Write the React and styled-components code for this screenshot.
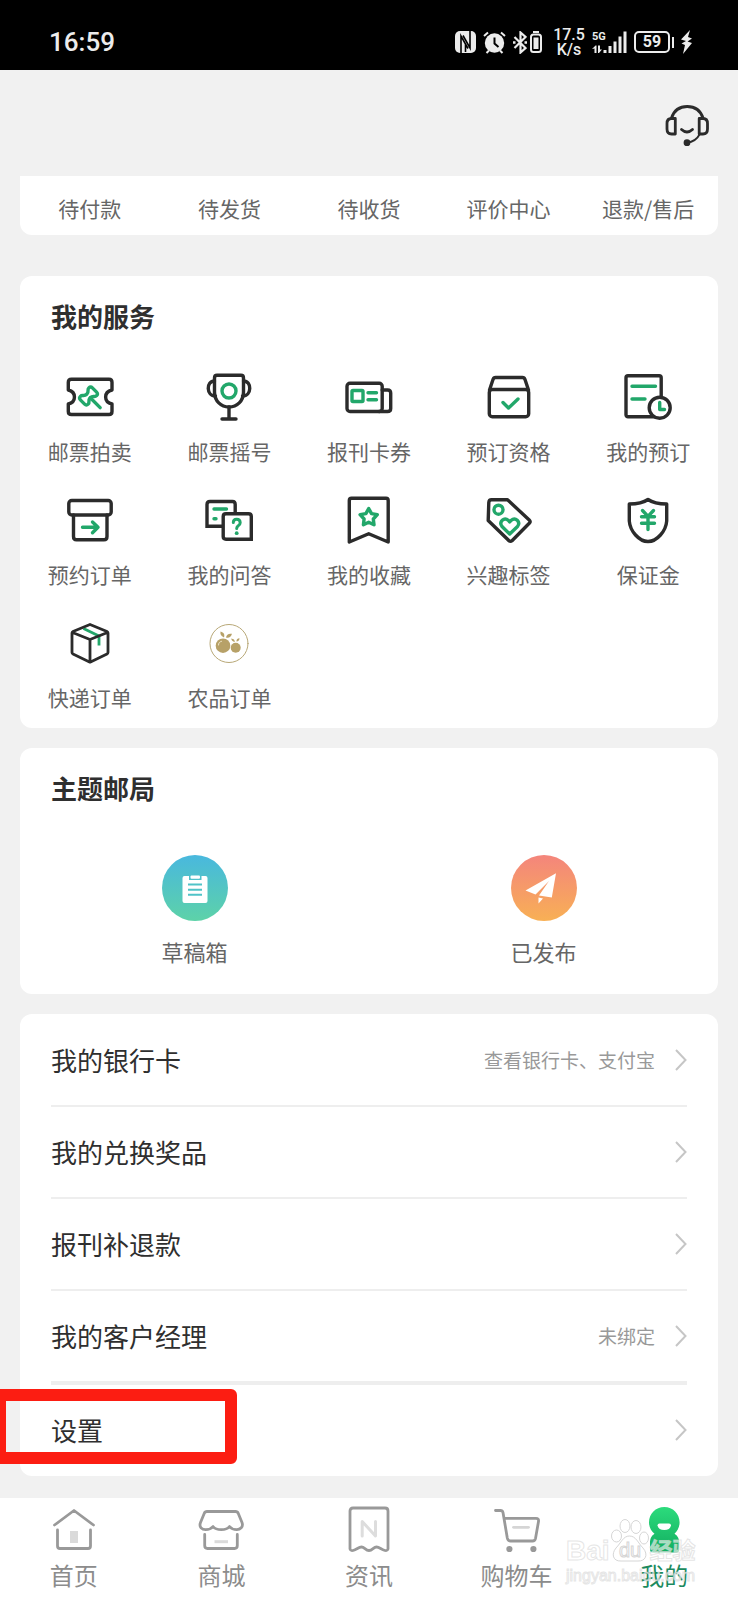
import styled, { createGlobalStyle } from "styled-components";

const GlobalStyle = createGlobalStyle`
  *{
    box-sizing:border-box;
  }
  body{
    margin:0;
    background:#f1f1f1;
    font-family:"Noto Sans CJK SC", "Noto Sans", sans-serif;
    color:#2f2f2f;
  }
  a{
    color:inherit;
    text-decoration:none;
  }
  button{
    margin:0;
    padding:0;
    border:0;
    background:none;
    color:inherit;
    font:inherit;
    cursor:pointer;
  }
  svg{
    display:block;
    flex:none;
  }
`;

const Page = styled.div`
  position: relative;
  display: flex;
  flex-direction: column;
  min-height: 100vh;
  overflow: hidden;
`;

const StatusBar = styled.header`
  display: flex;
  justify-content: space-between;
  align-items: center;
  height: 70px;
  padding: 14px 46px 0 49px;
  background: #000;
  color: #ececec;
  font-family: Roboto, "Noto Sans", sans-serif;
`;

const Clock = styled.time`
  font-size: 26px;
  font-weight: 500;
  line-height: 32px;
`;

const StatusIcons = styled.div`
  display: flex;
  align-items: center;
  gap: 7px;
`;

const Pair = styled.div`
  display: flex;
  gap: 3px;
`;

const Speed = styled.div`
  width: 32px;
  margin-left: 4px;
  font-size: 16px;
  font-weight: 500;
  line-height: 15px;
  text-align: center;
`;

const Battery = styled.div`
  display: flex;
  align-items: center;
  gap: 2px;
  &::after {
    content: "";
    width: 2px;
    height: 11px;
    background: #ececec;
  }
`;

const BatteryLevel = styled.span`
  width: 36px;
  height: 22px;
  border: 2px solid #ececec;
  border-radius: 5px;
  font-size: 16px;
  font-weight: 700;
  line-height: 18px;
  text-align: center;
`;

const TopBar = styled.div`
  display: flex;
  justify-content: flex-end;
  align-items: center;
  height: 106px;
  padding: 6px 27px 0;
`;

const Main = styled.main`
  flex: 1;
  display: flex;
  flex-direction: column;
  gap: 20px;
  padding: 0 20px 22px;
`;

const Card = styled.section`
  border-radius: 12px;
  background: #fff;
`;

const ListCard = styled(Card)`
  padding: 1px 0;
`;

const OrderCard = styled.nav`
  display: grid;
  grid-template-columns: repeat(5, 1fr);
  height: 59px;
  margin-bottom: 21px;
  padding-top: 20px;
  border-radius: 0 0 12px 12px;
  background: #fff;
  color: #666;
  font-size: 21px;
  line-height: 24px;
  text-align: center;
`;

const CardTitle = styled.h2`
  margin: 0;
  padding: 22px 31px 0;
  font-size: 26px;
  font-weight: 700;
  line-height: 36px;
`;

const ServiceGrid = styled.div`
  display: grid;
  grid-template-columns: repeat(${(props) => props.$columns}, 1fr);
  row-gap: 33px;
  padding: ${(props) => (props.$large ? "49px 0 31px" : "39px 0 19px")};
  font-size: ${(props) => (props.$large ? 22 : 21)}px;
`;

const ServiceItem = styled.button`
  display: flex;
  flex-direction: column;
  align-items: center;
  gap: 18px;
  color: #666;
  line-height: 24px;
`;

const ListRow = styled.button`
  position: relative;
  display: flex;
  align-items: center;
  width: 100%;
  padding: 0 31px;
  text-align: left;
`;

const RowBody = styled.span`
  flex: 1;
  display: flex;
  align-items: center;
  height: ${(props) => 90 + props.$line}px;
  border-bottom: ${(props) => props.$line}px solid #eee;
`;

const RowLabel = styled.span`
  flex: 1;
  font-size: 26px;
  line-height: 36px;
`;

const RowHint = styled.span`
  margin-right: 20px;
  color: #999;
  font-size: 19px;
  line-height: 26px;
`;

const Highlight = styled.span`
  position: absolute;
  top: 4px;
  left: -26px;
  width: 243px;
  height: 75px;
  border: 12px solid #fc1d12;
  border-radius: 6px;
  pointer-events: none;
`;

const TabBar = styled.nav`
  display: grid;
  grid-template-columns: repeat(5, 1fr);
  padding: 7px 0 11px;
  background: #fff;
`;

const Tab = styled.a`
  display: flex;
  flex-direction: column;
  align-items: center;
  gap: 8px;
  color: ${(props) => (props.$active ? "#1b8a5e" : "#8c8c8c")};
  font-size: 24px;
  line-height: 28px;
`;

const Watermark = styled.div`
  position: absolute;
  right: 40px;
  bottom: 14px;
  width: 132px;
  color: rgba(255, 255, 255, 0.6);
  -webkit-text-stroke: 1px rgba(212, 212, 212, 0.6);
  font-family: "Liberation Sans", "Noto Sans CJK SC", sans-serif;
  font-size: 16px;
  line-height: 20px;
  pointer-events: none;
`;

const WatermarkLogo = styled.div`
  display: flex;
  align-items: flex-end;
  gap: 1px;
  font-size: 28px;
  font-weight: 700;
  line-height: 30px;
  svg {
    margin-bottom: 4px;
  }
  span:last-child {
    font-size: 23px;
  }
`;

const DARK = "#2b2b2b";
const GREEN = "#22a76a";

function Icon({ children, stroke = DARK, width = 3.4 }) {
  return (
    <svg
      width="48"
      height="48"
      viewBox="0 0 48 48"
      fill="none"
      stroke={stroke}
      strokeWidth={width}
      strokeLinecap="round"
      strokeLinejoin="round"
      aria-hidden="true"
    >
      {children}
    </svg>
  );
}

const HeadsetIcon = () => (
  <Icon width={2.8}>
    <path d="M8.5 16C11 8.5 17 4.5 24.2 4.5S37.500 8.5 40 16" />
    <path d="M12.3 16.5V32H8.5Q4 32 4 27V21.5Q4 16.5 8.5 16.5ZM36.2 16.5V32H40Q44.5 32 44.5 27V21.5Q44.5 16.5 40 16.5Z" />
    <path d="M18.5 27.5Q24 32.5 29.5 27.5" />
    <path d="M36.5 32.5Q33 39.5 24 40.7" strokeWidth="1.8" />
    <circle cx="24" cy="40.7" r="2" fill={DARK} />
  </Icon>
);

const AuctionIcon = () => (
  <Icon>
    <path d="M5.5 6.3H43Q46 6.3 46 9.3V17C37.5 19 37.5 29 46 31V38.5Q46 41.5 43 41.5H5.5Q2.3 41.5 2.3 38.5V31C10.5 29 10.5 19 2.3 17V9.3Q2.3 6.3 5.5 6.3Z" />
    <g stroke={GREEN} transform="translate(22.5 23) rotate(-45)">
      <path d="M-6 -5.5C-3 -5.5 -4 -2.5 0 -2.5C4 -2.5 3 -5.5 6 -5.5Q8.5 -5.5 8.5 -3V3Q8.5 5.5 6 5.5C3 5.5 4 2.500 0 2.5C-4 2.5 -3 5.5 -6 5.5Q-8.5 5.5 -8.5 3V-3Q-8.5 -5.5 -6 -5.5Z" />
      <path d="M0 2.5V16.5" />
    </g>
  </Icon>
);

const TrophyIcon = () => (
  <Icon>
    <path d="M12 2.3H36Q38.5 2.3 38.5 5V19C38.5 28 32 34 24 34S9.5 28 9.5 19V5Q9.5 2.3 12 2.3Z" />
    <path d="M9.5 8C1 8 1 23 10.5 23M38.5 8C47 8 47 23 37.5 23M24 34V46M17 46H31" />
    <circle cx="24" cy="18" r="7" stroke={GREEN} />
  </Icon>
);

const CouponIcon = () => (
  <Icon>
    <rect x="2" y="10.2" width="35.2" height="28.3" rx="3" />
    <path d="M37.2 17H42.5Q45.7 17 45.7 20V35.5Q45.7 38.5 42.5 38.5H34" />
    <g stroke={GREEN}>
      <rect x="7" y="17.5" width="11" height="11" rx="1" />
      <path d="M23 19.7H31.5M23 26.7H31.5" />
    </g>
  </Icon>
);

const QualifyIcon = () => (
  <Icon>
    <rect x="4.3" y="16.5" width="39.4" height="27.3" rx="3" />
    <path d="M4.5 17L8 6.5Q8.7 4.5 10.5 4.5H37.5Q39.3 4.5 40 6.5L43.5 17" />
    <path d="M18 29.5L23.5 35L33 26" stroke={GREEN} />
  </Icon>
);

const BookingIcon = () => (
  <Icon>
    <rect x="2" y="2.8" width="35.2" height="41" rx="2" />
    <path d="M8 13.3H31.5M8 26H21" stroke={GREEN} />
    <circle cx="35.7" cy="34.7" r="10.5" fill="#fff" />
    <path d="M35.7 29.5V36.5H40.5" stroke={GREEN} />
  </Icon>
);

const ReserveIcon = () => (
  <Icon>
    <rect x="2.8" y="4.5" width="42.4" height="14.5" rx="3" />
    <path d="M7.5 19V40.5Q7.5 43.8 10.5 43.8H38Q41 43.8 41 40.5V19" />
    <path d="M16.5 31.3H32M26.5 26L32 31.3L26.5 36.8" stroke={GREEN} />
  </Icon>
);

const QuestionIcon = () => (
  <Icon>
    <path
      d="M17 30.2H2V8.5Q2 5.5 5 5.5H27.5Q30.2 5.5 30.2 8.5V16"
      strokeLinecap="butt"
      strokeLinejoin="miter"
    />
    <path
      d="M46.3 43.2H21Q18.2 43.2 18.2 40.5V20.5Q18.2 17.8 21 17.8H43.5Q46.3 17.8 46.3 20.5Z"
      strokeLinejoin="miter"
    />
    <g stroke={GREEN}>
      <path d="M9 13H21.5M9 22.7H11" />
      <path d="M28.3 26.5Q28.3 23.3 31.7 23.3T35.2 26.8Q35.2 28.7 33 30Q31.7 31 31.7 32.5" strokeWidth="3" />
    </g>
    <circle cx="31.7" cy="37.2" r="1.9" fill={GREEN} stroke="none" />
  </Icon>
);

const FavoriteIcon = () => (
  <Icon>
    <path d="M4.3 46V4.5Q4.3 2.3 6.5 2.3H41Q43.2 2.3 43.2 4.5V46L23.700 37.7Z" />
    <path
      d="M23.7 12.5L26.5 17.6L32.3 18.7L28.3 23L29 28.8L23.7 26.3L18.4 28.8L19.1 23L15.1 18.7L20.9 17.6Z"
      stroke={GREEN}
    />
  </Icon>
);

const TagIcon = () => (
  <Icon>
    <path d="M6.5 3.7H22.5L44.5 24.3Q45.7 25.8 44.5 27L27 44.7Q25.5 46 24 44.7L3.2 24.5L3.8 6.5Q4 3.7 6.5 3.7Z" />
    <g stroke={GREEN}>
      <circle cx="13.5" cy="13.7" r="4.500" />
      <path d="M24.7 38L17 30.5C13.5 26 19 20.5 23.5 24.5L24.7 26L26 24.5C30.500 20.5 36 26 32.5 30.5Z" />
    </g>
  </Icon>
);

const DepositIcon = () => (
  <Icon>
    <path d="M24 3.5C19 7 12 8 5.300 8V25C6 35 15 45.5 24 45.5S42 35 42.7 25V8C36 8 29 7 24 3.5Z" />
    <path
      d="M18.5 14.5L24 20.3L29.5 14.5M17.5 20.7H30.5M17.5 27.3H30.5M24 20.7V33.5"
      stroke={GREEN}
    />
  </Icon>
);

const ParcelIcon = () => (
  <Icon width={2.8}>
    <path d="M17.5 9.5L33 17V26.5" stroke={GREEN} strokeLinecap="butt" />
    <path d="M24 5.5L41 12.5Q42 13 42 14V33.5Q42 34.5 41 35L24 43.2L7 35Q6 34.5 6 33.5V14Q6 13 7 12.5ZM6.5 13.5L24 20.5L41.5 13.5M24 20.5V43" />
  </Icon>
);

const FarmIcon = () => (
  <Icon stroke="none">
    <circle cx="24" cy="24.5" r="19" stroke="#b8a877" strokeWidth="1" />
    <g fill="#b7a168">
      <circle cx="18" cy="26.7" r="7.300" />
      <circle cx="30.7" cy="28.7" r="5" />
      <path d="M19 18.5C16 17 15 15.5 15.5 12.5C19 13.5 20 15.5 19 18.5ZM21 18.5C21.5 15.5 23.5 14.3 27 14.8C26 18 24 19.3 21 18.5ZM29.8 23C27.5 22.5 26.5 21.5 26.2 19.5C28.8 19.8 29.8 21 29.8 23ZM31.5 22.5C31.3 20.5 32.3 19.5 34.5 19.3C34.5 21.3 33.5 22.5 31.5 22.5Z" />
    </g>
    <path d="M13.5 26C13.5 24 14.5 22.8 16.5 22.3" stroke="#efe6c8" strokeWidth="1" />
  </Icon>
);

const DraftIcon = () => (
  <svg width="66" height="66" viewBox="0 0 66 66" aria-hidden="true">
    <defs>
      <linearGradient id="draft" x1="0" y1="0" x2="0" y2="1">
        <stop offset="0" stopColor="#49b8de" />
        <stop offset="1" stopColor="#5dd2a8" />
      </linearGradient>
    </defs>
    <circle cx="33" cy="33" r="33" fill="url(#draft)" />
    <path
      d="M23 21H27V25H39.5V21H43.5Q45.5 21 45.5 23V46Q45.5 48 43.5 48H22.5Q20.5 48 20.5 46V23Q20.5 21 22.5 21Z"
      fill="#fff"
    />
    <rect x="28.5" y="20.5" width="9.5" height="3.2" rx="1" fill="#fff" />
    <path d="M26 29.5H40M26 34.7H40M26 39.8H40" stroke="#50c3c8" strokeWidth="2" />
  </svg>
);

const PublishIcon = () => (
  <svg width="66" height="66" viewBox="0 0 66 66" aria-hidden="true">
    <defs>
      <linearGradient id="publish" x1="0" y1="0" x2="0" y2="1">
        <stop offset="0" stopColor="#f4857c" />
        <stop offset="1" stopColor="#f8b055" />
      </linearGradient>
    </defs>
    <circle cx="33" cy="33" r="33" fill="url(#publish)" />
    <path
      d="M45 18.3L14.5 35.5L24.5 39.5L38 26L28 40.5L40.8 42.5ZM27.5 42.5L32 43.5L27.5 48.5Z"
      fill="#fff"
    />
  </svg>
);

const HomeIcon = () => (
  <Icon stroke="#999" width={2.8}>
    <path d="M4.5 20L24 5.5L43.5 20M7.5 25V41Q7.5 43.5 10 43.5H38Q40.5 43.5 40.5 41V25" />
    <rect x="20" y="26" width="8" height="12" fill="#dadada" stroke="none" />
  </Icon>
);

const ShopIcon = () => (
  <Icon stroke="#999" width={2.8}>
    <path d="M10 6.5H38.5Q40.5 6.5 41.3 8.5L45 17.5C46.7 22 43 24.7 39.8 24.7C36.5 24.7 34.5 24 32.5 21.5C30.5 24 28 24.7 24.3 24.7S18 24 16 21.5C14 24 12 24.7 8.7 24.7C5 24.7 1.7 22 3.5 17.5L7.2 8.5Q8 6.5 10 6.5Z" />
    <path d="M7.7 29.5V40.5Q7.7 43.5 10.5 43.5H37.5Q40.3 43.5 40.3 40.5V29.5" />
    <path d="M17.5 36.7H31" stroke="#dadada" strokeWidth="3" strokeLinecap="butt" />
  </Icon>
);

const NewsIcon = () => (
  <Icon stroke="#999" width={2.8}>
    <path d="M5 44V6Q5 3 8 3H40Q43 3 43 6V44Q42.5 46 40 45.5C36 44.5 34.5 42 31.5 42S27.5 45.5 24 45.5S19.5 42 16.5 42S12 44.5 8 45.5Q5.5 46 5 44Z" />
    <path d="M17.2 31V16.5L30.5 31V16.5" stroke="#ddd" strokeWidth="3" />
  </Icon>
);

const CartIcon = () => (
  <Icon stroke="#999" width={2.8}>
    <path d="M2.5 5.5H7.5Q9.5 5.5 10 7.5L14.3 33Q15 36 17.5 36H39.5Q42 36 42.5 33.5L45.5 16.5Q46 13.3 43 13.3H11" />
    <path d="M20.5 22.3H35.5" stroke="#d5d5d5" />
    <circle cx="16.4" cy="44" r="1.7" fill="#999" />
    <circle cx="40.4" cy="44" r="1.7" fill="#999" />
  </Icon>
);

const MineIcon = () => (
  <Icon stroke="none">
    <defs>
      <linearGradient id="mine" x1="0" y1="0" x2="0" y2="1">
        <stop offset="0" stopColor="#2cdb7c" />
        <stop offset="1" stopColor="#12ae60" />
      </linearGradient>
    </defs>
    <path
      d="M24.3 2C33 2 39.6 8.8 39.6 17.3C39.6 22 37.5 26 34.5 28.7C38 31 39.3 34 39.3 38V44.5Q39.3 47.5 36.3 47.5H13Q10 47.5 10 44.5V38C10 34 11 31 14.5 28.7C11 26 9 22 9 17.3C9 8.8 15.6 2 24.3 2Z"
      fill="url(#mine)"
    />
    <path d="M17.5 20.5Q17.5 18.5 19.5 18.5H29Q31 18.5 31 20.5Q30 25 24.3 25T17.5 20.5Z" fill="#fff" />
  </Icon>
);

const NfcIcon = () => (
  <svg width="21" height="22" viewBox="0 0 21 22" aria-hidden="true">
    <rect width="21" height="22" rx="5" fill="#ececec" />
    <path
      d="M6 22V5L13 17.5M15 0V17L8 4.5M10.5 13V21"
      fill="none"
      stroke="#000"
      strokeWidth="1.6"
    />
  </svg>
);

const AlarmIcon = () => (
  <svg width="23" height="23" viewBox="0 0 23 23" fill="none" stroke="#ececec" strokeWidth="2" aria-hidden="true">
    <circle cx="11.5" cy="12" r="9.700" fill="#ececec" stroke="none" />
    <path d="M1 5L5 1.5M22 5L18 1.5M3.5 22L6 19.5M19.5 22L17 19.5" />
    <path d="M11.5 6.5V12.5L15.5 16" stroke="#000" />
  </svg>
);

const BluetoothIcon = () => (
  <svg width="14" height="23" viewBox="0 0 14 23" fill="none" stroke="#ececec" strokeWidth="2.2" aria-hidden="true">
    <path d="M1.5 6L12.5 17L7.5 21.5V1.5L12.5 6L1.5 17" />
    <path d="M0 11.5H2.5M11.5 11.5H14" strokeWidth="2.4" />
  </svg>
);

const EarbudBatteryIcon = () => (
  <svg width="12" height="23" viewBox="0 0 12 23" aria-hidden="true">
    <rect x="1" y="3.5" width="10" height="17.500" rx="2.5" fill="none" stroke="#ececec" strokeWidth="2" />
    <rect x="3.5" y="6.5" width="5" height="11.500" fill="#ececec" />
    <rect x="3" y="0" width="6" height="2" fill="#ececec" />
  </svg>
);

const SignalIcon = () => (
  <svg width="35" height="23" viewBox="0 0 35 23" fill="#ececec" aria-hidden="true">
    <text x="0" y="9" fontSize="11" fontWeight="700">5G</text>
    <path d="M0 18L3.500 14.500H4.500V22H2.500V17.500ZM6 14.500H8V18.500H10L7 22H6Z" />
    <path d="M11.500 19H14.500V22H11.500ZM16.500 15H19.500V22H16.500ZM21.500 10.500H24.500V22H21.500ZM26.500 5.500H29.500V22H26.500ZM31.500 0.500H34.500V22H31.500Z" />
  </svg>
);

const BoltIcon = () => (
  <svg width="11" height="24" viewBox="0 0 11 24" aria-hidden="true">
    <path d="M9 0L0 9.5L5 11L0.500 13.5L4 15L2 24L11 13L6.500 11.5L11 8.5L7 7Z" fill="#ececec" />
  </svg>
);

const ChevronIcon = () => (
  <svg width="12" height="24" viewBox="0 0 12 24" fill="none" stroke="#c6c6c6" strokeWidth="2" aria-hidden="true">
    <path d="M1 2L10.5 12L1 22" />
  </svg>
);

const PawIcon = () => (
  <svg
    width="38"
    height="43"
    viewBox="0 0 38 43"
    fill="#fff"
    fillOpacity="0.6"
    stroke="#d6d6d6"
    strokeWidth="1"
    aria-hidden="true"
  >
    <ellipse cx="5.5" cy="17" rx="5" ry="6" />
    <ellipse cx="14" cy="7" rx="5" ry="6.500" />
    <ellipse cx="25" cy="8" rx="5" ry="6.500" />
    <ellipse cx="33" cy="19" rx="4.500" ry="6" />
    <path d="M18.5 17C25 17 27 24 32 29C38 36 34 42.5 27 42H10C2 42.5 0 35 5 29C10 24 12 17 18.5 17Z" />
    <text x="8" y="38" fontSize="20" fontWeight="400">du</text>
  </svg>
);

const orders = ["待付款", "待发货", "待收货", "评价中心", "退款/售后"];

const services = [
  { name: "邮票拍卖", icon: AuctionIcon },
  { name: "邮票摇号", icon: TrophyIcon },
  { name: "报刊卡券", icon: CouponIcon },
  { name: "预订资格", icon: QualifyIcon },
  { name: "我的预订", icon: BookingIcon },
  { name: "预约订单", icon: ReserveIcon },
  { name: "我的问答", icon: QuestionIcon },
  { name: "我的收藏", icon: FavoriteIcon },
  { name: "兴趣标签", icon: TagIcon },
  { name: "保证金", icon: DepositIcon },
  { name: "快递订单", icon: ParcelIcon },
  { name: "农品订单", icon: FarmIcon },
];

const posts = [
  { name: "草稿箱", icon: DraftIcon },
  { name: "已发布", icon: PublishIcon },
];

const rows = [
  { name: "我的银行卡", hint: "查看银行卡、支付宝", line: 2 },
  { name: "我的兑换奖品", line: 2 },
  { name: "报刊补退款", line: 2 },
  { name: "我的客户经理", hint: "未绑定", line: 4 },
  { name: "设置", line: 0, highlight: true },
];

const tabs = [
  { name: "首页", icon: HomeIcon },
  { name: "商城", icon: ShopIcon },
  { name: "资讯", icon: NewsIcon },
  { name: "购物车", icon: CartIcon },
  { name: "我的", icon: MineIcon, active: true },
];

function Services({ title, items, columns, large }) {
  return (
    <Card>
      <CardTitle>{title}</CardTitle>
      <ServiceGrid $columns={columns} $large={large}>
        {items.map(({ name, icon: ItemIcon }) => (
          <ServiceItem type="button" key={name}>
            <ItemIcon />
            {name}
          </ServiceItem>
        ))}
      </ServiceGrid>
    </Card>
  );
}

export default function App() {
  return (
    <Page>
      <GlobalStyle />
      <StatusBar>
        <Clock>16:59</Clock>
        <StatusIcons>
          <NfcIcon />
          <AlarmIcon />
          <Pair>
            <BluetoothIcon />
            <EarbudBatteryIcon />
          </Pair>
          <Speed>
            17.5
            <br />
            K/s
          </Speed>
          <SignalIcon />
          <Battery>
            <BatteryLevel>59</BatteryLevel>
          </Battery>
          <BoltIcon />
        </StatusIcons>
      </StatusBar>
      <TopBar>
        <button type="button" aria-label="客服">
          <HeadsetIcon />
        </button>
      </TopBar>
      <Main>
        <OrderCard>
          {orders.map((name) => (
            <a href="#orders" key={name}>{name}</a>
          ))}
        </OrderCard>
        <Services title="我的服务" items={services} columns={5} />
        <Services title="主题邮局" items={posts} columns={2} large />
        <ListCard>
          {rows.map((row) => (
            <ListRow type="button" key={row.name}>
              <RowBody $line={row.line}>
                <RowLabel>{row.name}</RowLabel>
                {row.hint && <RowHint>{row.hint}</RowHint>}
                <ChevronIcon />
              </RowBody>
              {row.highlight && <Highlight />}
            </ListRow>
          ))}
        </ListCard>
      </Main>
      <TabBar>
        {tabs.map(({ name, icon: TabIcon, active }) => (
          <Tab href="#tab" key={name} $active={active}>
            <TabIcon />
            {name}
          </Tab>
        ))}
      </TabBar>
      <Watermark>
        <WatermarkLogo>
          <span>Bai</span>
          <PawIcon />
          <span>经验</span>
        </WatermarkLogo>
        jingyan.baidu.com
      </Watermark>
    </Page>
  );
}
